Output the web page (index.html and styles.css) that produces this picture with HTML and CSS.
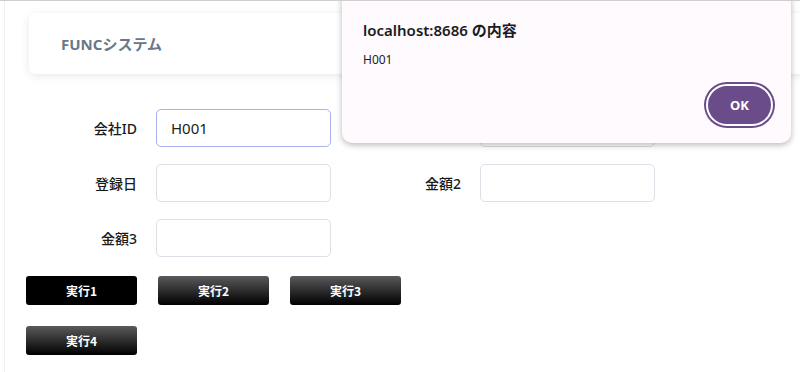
FILE: index.html
```html
<!DOCTYPE html>
<html lang="ja">
<head>
<meta charset="utf-8">
<title>FUNCシステム</title>
<link rel="stylesheet" href="styles.css">
</head>
<body>
<div class="page">
  <header class="header-card">
    <h1 class="title">FUNCシステム</h1>
  </header>
  <form class="form">
    <label class="label">会社ID</label>
    <input class="input input-focus" type="text" value="H001">
    <label class="label">金額1</label>
    <input class="input" type="text">
    <label class="label">登録日</label>
    <input class="input" type="text">
    <label class="label">金額2</label>
    <input class="input" type="text">
    <label class="label">金額3</label>
    <input class="input" type="text">
  </form>
  <div class="buttons">
    <button class="btn btn-active" type="button">実行1</button>
    <button class="btn" type="button">実行2</button>
    <button class="btn" type="button">実行3</button>
    <button class="btn" type="button">実行4</button>
  </div>
</div>
<div class="dialog">
  <div class="dialog-title">localhost:8686 の内容</div>
  <div class="dialog-msg">H001</div>
  <div class="dialog-actions">
    <button class="ok" type="button">OK</button>
  </div>
</div>
</body>
</html>
```

FILE: styles.css
```css
html, body {
  margin: 0;
  padding: 0;
  overflow: hidden;
  background: #fff;
}
body {
  width: 800px;
  height: 372px;
  position: relative;
  border-top: 1px solid #cfcfcf;
  box-sizing: border-box;
  font-family: "Noto Sans", "Noto Sans CJK JP", sans-serif;
}
.page {
  margin-left: 4px;
  border-left: 1px solid #f1f1f1;
  height: 100%;
  padding: 12px 0 0 21px;
  box-sizing: border-box;
}
.header-card {
  margin-left: 3px;
  margin-right: -40px;
  height: 61px;
  border-radius: 6px;
  background: #fff;
  box-shadow: 0 2px 10px rgba(0, 0, 0, 0.09);
  display: flex;
  align-items: center;
  padding-left: 32px;
}
.title {
  margin: 0;
  font-size: 15px;
  font-weight: 700;
  color: #687789;
  letter-spacing: 0;
}
.form {
  margin-top: 35px;
  display: grid;
  grid-template-columns: 111px 175px 111px 175px;
  column-gap: 19px;
  row-gap: 17px;
  align-items: center;
}
.form .label:nth-child(4n+3) {
  margin-left: 2px;
}
.label {
  text-align: right;
  font-size: 14px;
  font-weight: 500;
  color: #1a1a1a;
  font-family: "Noto Sans", "Noto Sans CJK JP", sans-serif;
}
.input {
  height: 38px;
  box-sizing: border-box;
  border: 1px solid #dcdfe6;
  border-radius: 5px;
  padding: 0 14px;
  font-size: 15px;
  color: #222;
  font-family: "Noto Sans", "Noto Sans CJK JP", sans-serif;
  outline: none;
  background: #fff;
}
.input-focus {
  border-color: #a9b0ee;
}
.buttons {
  margin-top: 19px;
  display: grid;
  grid-template-columns: repeat(3, 111px);
  column-gap: 21px;
  row-gap: 21px;
}
.btn {
  height: 29px;
  border: none;
  border-radius: 3px;
  color: #fff;
  font-size: 12px;
  font-weight: 700;
  font-family: "Noto Sans CJK JP", sans-serif;
  background: linear-gradient(#5a5a5a, #000);
  padding: 0;
}
.btn-active {
  background: #000;
}
.dialog {
  position: absolute;
  left: 342px;
  top: -20px;
  width: 449px;
  height: 162px;
  box-sizing: border-box;
  background: #fefafe;
  border-radius: 10px;
  box-shadow: 0 2px 6px rgba(0, 0, 0, 0.28);
  padding: 38px 18px 0 21px;
}
.dialog-title {
  font-size: 15px;
  font-weight: 600;
  color: #1c1b1f;
  line-height: 22px;
}
.dialog-msg {
  margin-top: 11px;
  font-size: 12px;
  color: #1c1b1f;
  line-height: 16px;
}
.dialog-actions {
  display: flex;
  justify-content: flex-end;
  margin-top: 16px;
}
.ok {
  width: 67px;
  height: 42px;
  border-radius: 21px;
  border: 2px solid #fff;
  box-shadow: 0 0 0 2px #6a4c8a;
  background: #6a4c8a;
  color: #fff;
  font-size: 13px;
  font-weight: 700;
  font-family: "Noto Sans", sans-serif;
  padding: 0;
}
```
